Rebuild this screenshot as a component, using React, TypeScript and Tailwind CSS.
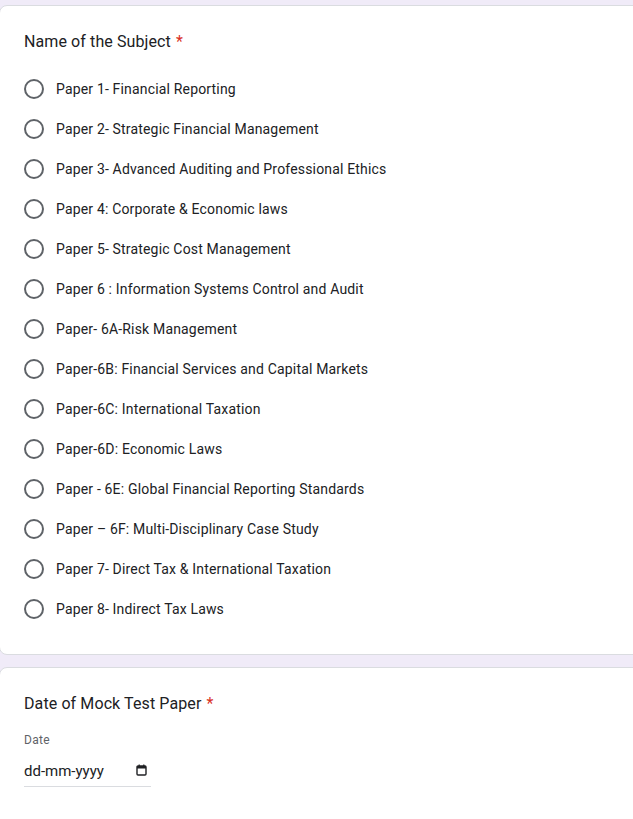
import React from "react";

const options = [
  "Paper 1- Financial Reporting",
  "Paper 2- Strategic Financial Management",
  "Paper 3- Advanced Auditing and Professional Ethics",
  "Paper 4: Corporate & Economic laws",
  "Paper 5- Strategic Cost Management",
  "Paper 6 : Information Systems Control and Audit",
  "Paper- 6A-Risk Management",
  "Paper-6B: Financial Services and Capital Markets",
  "Paper-6C: International Taxation",
  "Paper-6D: Economic Laws",
  "Paper - 6E: Global Financial Reporting Standards",
  "Paper \u2013 6F: Multi-Disciplinary Case Study",
  "Paper 7- Direct Tax & International Taxation",
  "Paper 8- Indirect Tax Laws",
];

export default function App() {
  return (
    <div
      className="w-[633px] h-[819px] overflow-hidden bg-[#f0ebf8] pt-[5px]"
      style={{ fontFamily: "Roboto, Arial, sans-serif" }}
    >
      <div className="ml-[-1px] w-[680px] bg-white border border-[#dadce0] rounded-lg px-6 pt-[24px] pb-[25px]">
        <div className="h-6 flex items-center text-[16px] text-[#202124] tracking-[0.1px]">
          Name of the Subject<span className="text-[#d93025] ml-[5px]">*</span>
        </div>
        <div className="mt-[15px] flex flex-col">
          {options.map((o) => (
            <label key={o} className="h-10 flex items-center">
              <span className="w-5 h-5 rounded-full border-2 border-[#5f6368] shrink-0" />
              <span className="ml-3 text-[14px] text-[#202124] tracking-[0.17px]">{o}</span>
            </label>
          ))}
        </div>
      </div>
      <div className="mt-3 ml-[-1px] w-[680px] h-[200px] bg-white border border-[#dadce0] rounded-lg px-6 pt-[24px]">
        <div className="h-6 flex items-center text-[16px] text-[#202124] tracking-[0.1px]">
          Date of Mock Test Paper<span className="text-[#d93025] ml-[5px]">*</span>
        </div>
        <div className="mt-4 text-[12px] text-[#5f6368] tracking-[0.3px] leading-4">Date</div>
        <div className="mt-[9px] w-[127px] h-[30px] border-b border-[#dadce0] flex items-center justify-between pr-[4px]">
          <span className="text-[15px] text-[#202124] tracking-[0px]">dd-mm-yyyy</span>
          <svg width="11" height="12" viewBox="0 0 11 12" className="mt-[-4px]">
            <rect x="1" y="2" width="9" height="9" rx="1" fill="none" stroke="#202124" strokeWidth="1.4" />
            <rect x="1" y="2" width="9" height="2.5" fill="#202124" />
            <rect x="2.6" y="0.5" width="1.2" height="2" fill="#202124" />
            <rect x="7.2" y="0.5" width="1.2" height="2" fill="#202124" />
          </svg>
        </div>
      </div>
    </div>
  );
}
